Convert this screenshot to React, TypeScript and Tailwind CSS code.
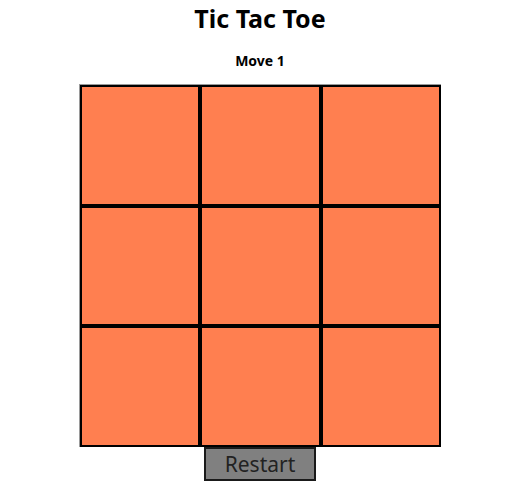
const cells = Array.from({length: 9}, (_, i) => i);

export default function App() {
  return (
    <div className="flex w-[520px] flex-col items-center bg-white font-['Noto_Sans',sans-serif] text-black">
      <h1 className="mt-[1px] text-[25px] font-bold leading-[34px]">Tic Tac Toe</h1>
      <p className="mt-[16px] text-[14px] font-bold leading-[20px]">Move 1</p>
      <div className="mt-[13px] grid grid-cols-[repeat(3,120.67px)] border-l border-t border-[#9a9a9a]">
        {cells.map((i) => (
          <div key={i} className="h-[120.67px] border-2 border-black bg-[#ff7f50]" />
        ))}
      </div>
      <button
        type="button"
        className="h-[34px] w-[112px] border-2 border-[#1a1a1a] bg-[#808080] text-[21px] leading-[28px] text-[#222]"
      >
        Restart
      </button>
    </div>
  );
}
